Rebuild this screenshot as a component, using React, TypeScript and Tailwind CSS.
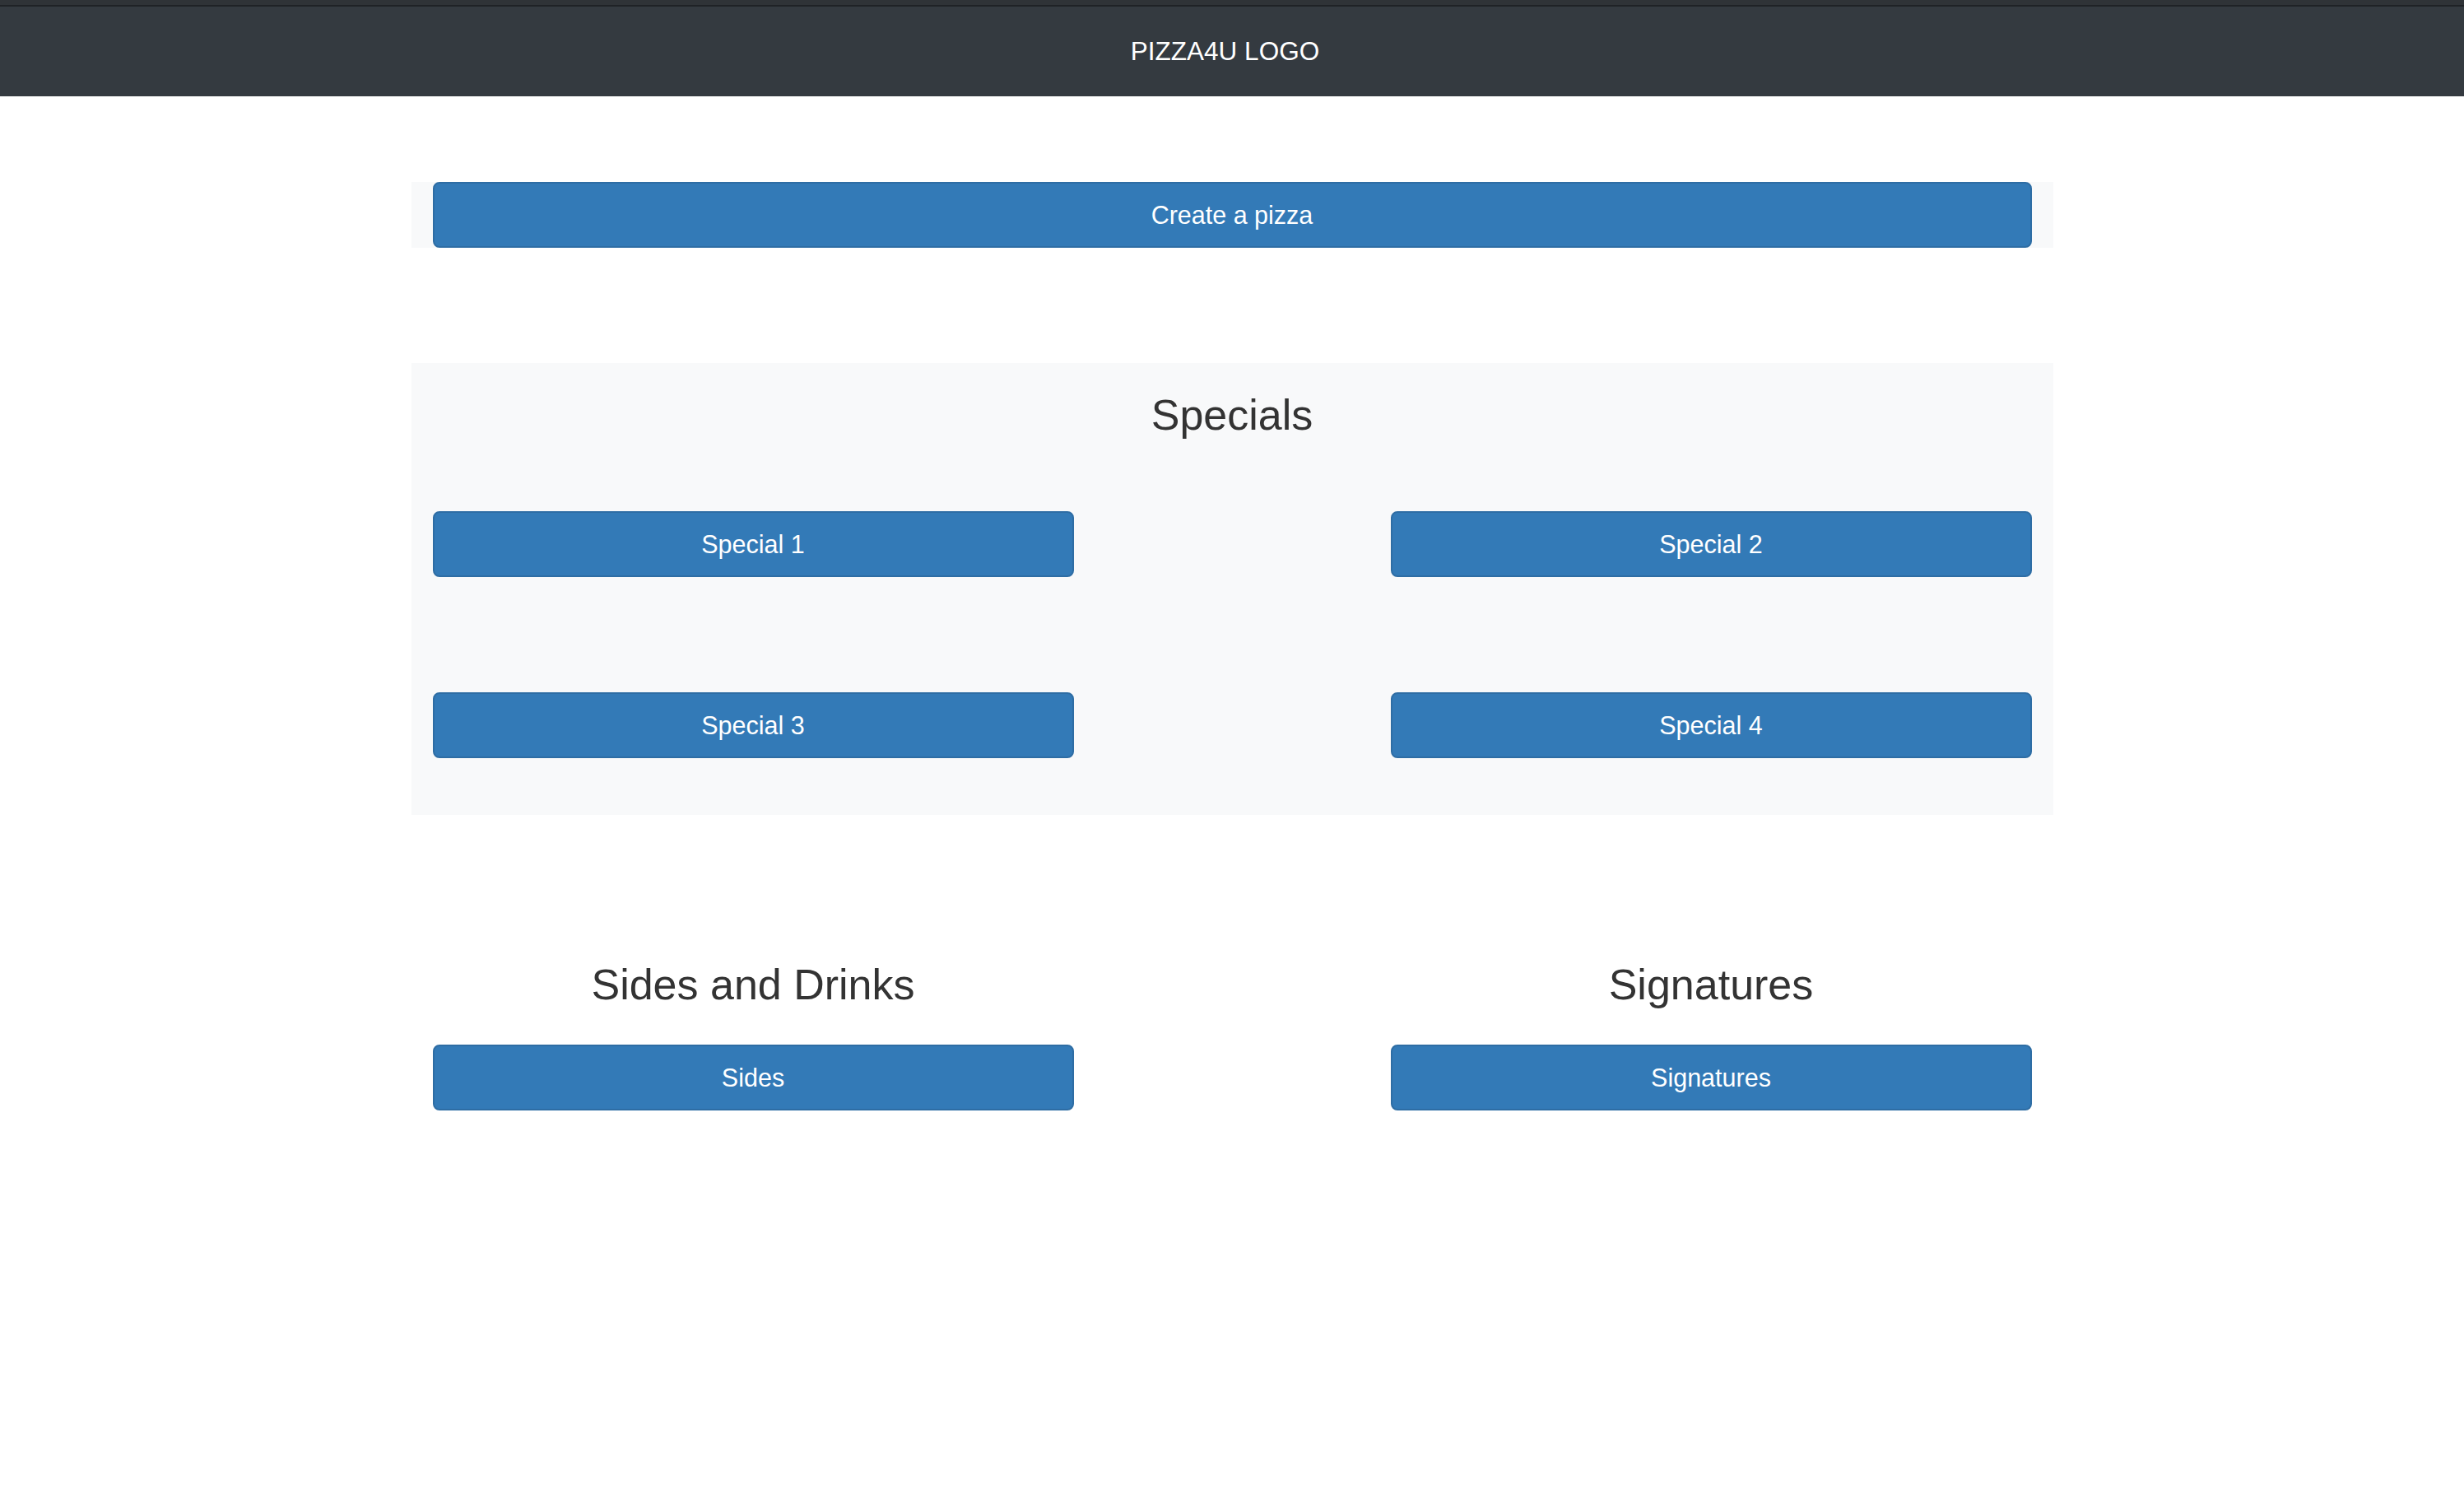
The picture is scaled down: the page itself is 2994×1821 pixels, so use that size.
export default function App() {
    const btn =
        'flex h-[80px] w-full items-center justify-center rounded-[8px] border-2 border-[#2e6da4] bg-[#337ab7] text-[30.5px] leading-none text-white';

    return (
        <div className="min-h-screen bg-white font-['Liberation_Sans',Arial,sans-serif] text-[#333]">
            {/* Navbar */}
            <div className="h-[6px] bg-[#2f3337]" />
            <div className="h-[2px] bg-[#1f2226]" />
            <div className="flex h-[109px] items-center justify-center bg-[#343a40] pr-[17px] text-[31.5px] text-white">
                PIZZA4U LOGO
            </div>

            <div className="mx-auto w-[1995px]">
                {/* Create */}
                <div className="mt-[104px] bg-[#f8f9fa] px-[26px]">
                    <button className={btn}>Create a pizza</button>
                </div>

                {/* Specials */}
                <div className="mt-[140px] bg-[#f8f9fa] px-[26px] pt-[35px] pb-[69px]">
                    <h2 className="text-center text-[52px] leading-[57px]">Specials</h2>
                    <div className="mt-[88px] grid grid-cols-[779px_779px] justify-between gap-y-[140px]">
                        <button className={btn}>Special 1</button>
                        <button className={btn}>Special 2</button>
                        <button className={btn}>Special 3</button>
                        <button className={btn}>Special 4</button>
                    </div>
                </div>

                {/* Sides / Signatures */}
                <div className="mt-[178px] grid grid-cols-[779px_779px] justify-between px-[26px]">
                    <div>
                        <h2 className="text-center text-[52px] leading-[57px]">Sides and Drinks</h2>
                        <button className={`${btn} mt-[44px]`}>Sides</button>
                    </div>
                    <div>
                        <h2 className="text-center text-[52px] leading-[57px]">Signatures</h2>
                        <button className={`${btn} mt-[44px]`}>Signatures</button>
                    </div>
                </div>
            </div>
        </div>
    );
}
